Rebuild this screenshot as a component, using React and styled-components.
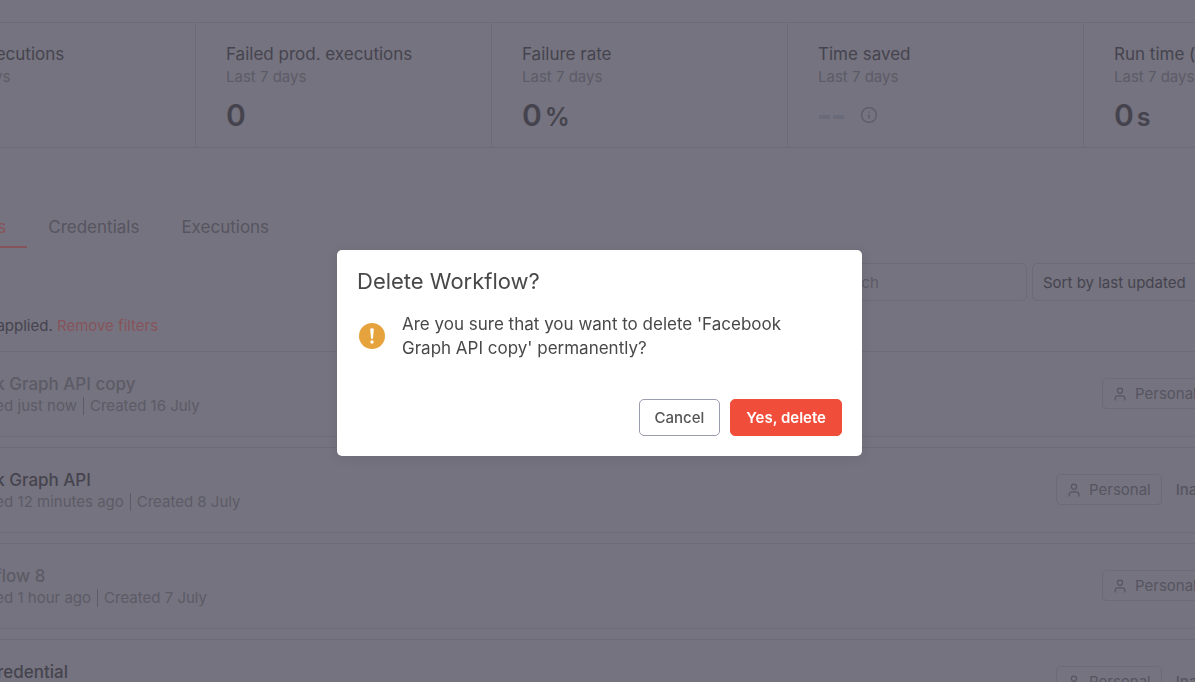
import React from "react";
import styled, { createGlobalStyle } from "styled-components";

const c = {
  bg: "#75737f",
  line: "#696a7a",
  faint: "#6d6b79",
  dark: "#45444e",
  mid: "#565560",
  light: "#5c5b66",
  red: "#87535b",
};

const GlobalStyle = createGlobalStyle`
  * { box-sizing: border-box; }
  body { margin: 0; background: ${c.bg}; }
  body, button, input, select { font-family: Inter, "Liberation Sans", sans-serif; }
  h1, h2, h3, p, ul { margin: 0; padding: 0; }
`;

const Viewport = styled.div`
  height: 100vh;
  overflow: hidden;
`;

/* The overview is wider than the window and runs past both of its edges. */
const Page = styled.main`
  margin: 0 -186px 0 -101px;
  padding-top: 22px;
`;

const Stats = styled.section`
  display: flex;
  border: 1px solid ${c.line};
`;

const Stat = styled.article`
  flex: 1 1 0;
  height: 124px;
  padding: 19px 30px 0;
  border-right: 1px solid ${c.line};
`;

const StatName = styled.h3`
  font-size: 17px;
  line-height: 24px;
  font-weight: 400;
  color: ${c.dark};
  white-space: nowrap;
`;

const StatPeriod = styled.p`
  font-size: 15px;
  line-height: 22px;
  color: ${c.light};
`;

const StatValue = styled.div`
  display: flex;
  align-items: baseline;
  gap: 3px;
  margin-top: 9px;
  font-size: 30px;
  line-height: 36px;
  font-weight: 600;
  color: ${c.dark};
`;

const Unit = styled.span`
  font-size: 25px;
`;

const NoValue = styled.div`
  display: flex;
  align-items: center;
  gap: 15px;
  margin-top: 9px;
  height: 36px;
  color: ${c.light};
`;

const Dashes = styled.svg`
  width: 27px;
  height: 36px;
`;

const Tabs = styled.nav`
  display: flex;
  margin-top: 60px;
  padding-left: 1px;
`;

const Tab = styled.a`
  padding: 8px 21px 7px;
  font-size: 17px;
  line-height: 23px;
  color: ${(p) => (p.$active ? c.red : c.mid)};
  border-bottom: 2px solid ${(p) => (p.$active ? c.red : "transparent")};
  text-decoration: none;
`;

const Toolbar = styled.div`
  display: flex;
  justify-content: flex-end;
  gap: 5px;
  margin-top: 15px;
`;

const field = `
  height: 38px;
  border: 1px solid ${c.line};
  border-radius: 5px;
  background: transparent;
  color: ${c.dark};
  font-size: 15px;
`;

const Search = styled.input`
  ${field}
  width: 232px;
  padding: 0 10px 0 33px;
  &::placeholder { color: ${c.light}; opacity: 1; }
`;

const Sort = styled.select`
  ${field}
  appearance: none;
  width: 349px;
  padding: 0 10px;
`;

const FilterNote = styled.p`
  margin-top: 14px;
  padding-left: 23px;
  font-size: 15px;
  line-height: 22px;
  color: ${c.dark};
`;

const FilterLink = styled.a`
  color: ${c.red};
  text-decoration: none;
`;

const List = styled.ul`
  display: flex;
  flex-direction: column;
  gap: 10px;
  margin-top: 14px;
  list-style: none;
`;

const Row = styled.li`
  display: flex;
  align-items: center;
  justify-content: space-between;
  height: 86px;
  padding: 0 20px 1px 21px;
  border: 1px solid ${(p) => (p.$archived ? c.faint : c.line)};
  border-radius: 8px;
`;

const RowTitle = styled.h2`
  padding-left: 4px;
  font-size: 17px;
  line-height: 24px;
  font-weight: 500;
  color: ${(p) => (p.$archived ? c.light : c.dark)};
`;

const RowMeta = styled.p`
  display: flex;
  align-items: center;
  gap: 6px;
  font-size: 15px;
  line-height: 20px;
  color: ${c.light};
`;

const Divider = styled.span`
  width: 1px;
  height: 18px;
  background: ${c.light};
`;

const RowSide = styled.div`
  display: flex;
  align-items: center;
  gap: 14px;
  width: ${(p) => (p.$archived ? 258 : 304)}px;
`;

const Badge = styled.span`
  display: flex;
  align-items: center;
  gap: 8px;
  height: 31px;
  padding: 0 10px;
  border: 1px solid ${c.line};
  border-radius: 5px;
  font-size: 15px;
  color: ${c.mid};
`;

const Status = styled.span`
  font-size: 15px;
  font-weight: 500;
  color: ${c.mid};
`;

const Overlay = styled.div`
  position: fixed;
  inset: 0;
  display: flex;
  align-items: center;
  justify-content: center;
  padding: 24px 0 0 4px;
`;

const Dialog = styled.section`
  width: 525px;
  padding: 18px 20px 20px;
  border-radius: 5px;
  background: #fff;
  color: #484848;
  box-shadow: 0 2px 12px rgba(40, 36, 60, 0.1);
`;

const DialogTitle = styled.h1`
  font-size: 22px;
  line-height: 26px;
  font-weight: 400;
`;

const DialogBody = styled.div`
  display: flex;
  align-items: center;
  gap: 15px;
  margin-top: 18px;
  padding-right: 40px;
`;

const DialogText = styled.p`
  flex: 1;
  font-size: 17px;
  line-height: 24px;
`;

const Actions = styled.div`
  display: flex;
  justify-content: flex-end;
  gap: 10px;
  margin-top: 39px;
`;

const Button = styled.button`
  height: 37px;
  padding: 0 15px;
  border: 1px solid ${(p) => (p.$danger ? "#f04e3a" : "#9a9cb0")};
  border-radius: 5px;
  background: ${(p) => (p.$danger ? "#f04e3a" : "#fff")};
  color: ${(p) => (p.$danger ? "#fff" : "#555")};
  font-size: 15px;
  font-weight: ${(p) => (p.$danger ? 600 : 500)};
`;

const UserIcon = () => (
  <svg width="14" height="14" viewBox="0 0 14 14" fill="none" stroke="currentColor" strokeWidth="1.2" strokeLinecap="round" aria-hidden="true">
    <circle cx="7" cy="3.7" r="2.6" />
    <path d="M2.1 13V11.7a2.9 2.9 0 0 1 2.9-2.9h4a2.9 2.9 0 0 1 2.9 2.9V13" />
  </svg>
);

const InfoIcon = () => (
  <svg width="18" height="18" viewBox="0 0 18 18" fill="none" stroke="currentColor" aria-hidden="true">
    <circle cx="9" cy="9" r="7.4" strokeWidth="1.3" />
    <path d="M9 8.4V12.4M9 5.4V6.8" strokeWidth="1.4" />
  </svg>
);

const WarningIcon = () => (
  <svg width="30" height="30" viewBox="0 0 30 30" aria-hidden="true">
    <circle cx="15" cy="15" r="13" fill="#e6a23c" />
    <path d="M13.2 8.6Q13.2 7.2 15 7.2T16.8 8.6L16 17.2Q15.9 18 15 18T14 17.2Z" fill="#fff" />
    <circle cx="15" cy="21" r="1.7" fill="#fff" />
  </svg>
);

const stats = [
  { name: "Prod. executions", value: "1" },
  { name: "Failed prod. executions", value: "0" },
  { name: "Failure rate", value: "0", unit: "%" },
  { name: "Time saved" },
  { name: "Run time (avg.)", value: "0", unit: "s" },
];

const workflows = [
  { name: "Facebook Graph API copy", updated: "just now", created: "16 July", archived: true },
  { name: "Facebook Graph API", updated: "12 minutes ago", created: "8 July" },
  { name: "My workflow 8", updated: "1 hour ago", created: "7 July", archived: true },
  { name: "Get my credential", updated: "1 hour ago", created: "7 July" },
];

export default function App() {
  return (
    <>
      <GlobalStyle />
      <Viewport>
        <Page>
          <Stats>
            {stats.map((s) => (
              <Stat key={s.name}>
                <StatName>{s.name}</StatName>
                <StatPeriod>Last 7 days</StatPeriod>
                {s.value ? (
                  <StatValue>
                    {s.value}
                    {s.unit && <Unit>{s.unit}</Unit>}
                  </StatValue>
                ) : (
                  <NoValue>
                    <Dashes viewBox="0 0 27 36" aria-label="No value">
                      <path d="M1 20H12M15 20H26" stroke="#696a7a" strokeWidth="4" />
                    </Dashes>
                    <InfoIcon />
                  </NoValue>
                )}
              </Stat>
            ))}
          </Stats>
          <Tabs>
            <Tab href="#workflows" $active>Workflows</Tab>
            <Tab href="#credentials">Credentials</Tab>
            <Tab href="#executions">Executions</Tab>
          </Tabs>
          <Toolbar>
            <Search type="text" placeholder="Search" aria-label="Search" />
            <Sort aria-label="Sort workflows">
              <option>Sort by last updated</option>
            </Sort>
          </Toolbar>
          <FilterNote>
            Filters are applied. <FilterLink href="#reset">Remove filters</FilterLink>
          </FilterNote>
          <List>
            {workflows.map((w) => (
              <Row key={w.name} $archived={w.archived}>
                <div>
                  <RowTitle $archived={w.archived}>{w.name}</RowTitle>
                  <RowMeta>
                    Last updated {w.updated}
                    <Divider />
                    Created {w.created}
                  </RowMeta>
                </div>
                <RowSide $archived={w.archived}>
                  <Badge>
                    <UserIcon />
                    Personal
                  </Badge>
                  {!w.archived && <Status>Inactive</Status>}
                </RowSide>
              </Row>
            ))}
          </List>
        </Page>
      </Viewport>
      <Overlay>
        <Dialog role="dialog" aria-modal="true" aria-labelledby="dialog-title">
          <DialogTitle id="dialog-title">Delete Workflow?</DialogTitle>
          <DialogBody>
            <WarningIcon />
            <DialogText>
              Are you sure that you want to delete 'Facebook Graph API copy' permanently?
            </DialogText>
          </DialogBody>
          <Actions>
            <Button type="button">Cancel</Button>
            <Button type="button" $danger>Yes, delete</Button>
          </Actions>
        </Dialog>
      </Overlay>
    </>
  );
}
